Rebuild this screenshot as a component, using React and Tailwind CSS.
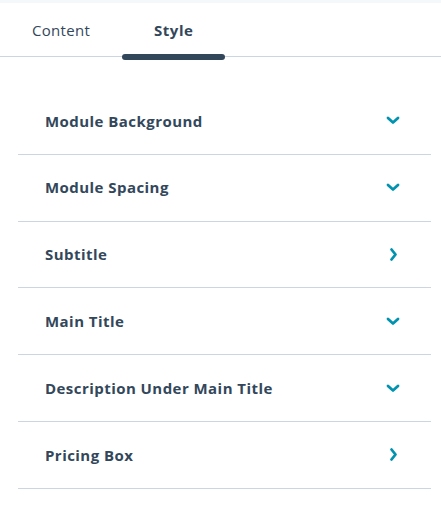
import React from "react";

const items = [
  { label: "Module Background", open: true },
  { label: "Module Spacing", open: true },
  { label: "Subtitle", open: false },
  { label: "Main Title", open: true },
  { label: "Description Under Main Title", open: true },
  { label: "Pricing Box", open: false },
];

function ChevronDown() {
  return (
    <svg width="14" height="9" viewBox="0 0 14 9" fill="none">
      <path d="M2 2l5 4.5L12 2" stroke="#0093b0" strokeWidth="2.8" strokeLinecap="round" strokeLinejoin="round" />
    </svg>
  );
}

function ChevronRight() {
  return (
    <svg width="9" height="15" viewBox="0 0 9 15" fill="none">
      <path d="M2.5 2.5l4 5-4 5" stroke="#0093b0" strokeWidth="2.8" strokeLinecap="round" strokeLinejoin="round" />
    </svg>
  );
}

export default function App() {
  return (
    <div className="w-[441px] h-[508px] bg-white text-[#33475b] overflow-hidden" style={{ fontFamily: "'Open Sans', sans-serif" }}>
      <div className="h-[3px] bg-[#f5f8fa]" />
      <div className="flex h-[54px] border-b border-[#cbd6e2]">
        <div className="px-8 flex items-center pt-[1px] text-[15px] tracking-[0.3px] text-[#33475b]">Content</div>
        <div className="relative px-8 flex items-center pt-[1px] text-[15px] tracking-[0.5px] font-bold text-[#33475b]">
          Style
          <div className="absolute left-0 right-0 bottom-[-4px] h-[6px] rounded-full bg-[#33475b]" />
        </div>
      </div>
      <div className="ml-[18px] mr-[10px] mt-[31px]">
        {items.map((it) => (
          <div key={it.label} className="h-[66.8px] border-b border-[#cbd6e2] flex items-center justify-between pl-[27px] pr-[31px]">
            <span className="text-[15px] font-bold tracking-[0.45px]">{it.label}</span>
            <span className="flex items-center justify-center w-[14px]">
              {it.open ? <ChevronDown /> : <ChevronRight />}
            </span>
          </div>
        ))}
      </div>
    </div>
  );
}
